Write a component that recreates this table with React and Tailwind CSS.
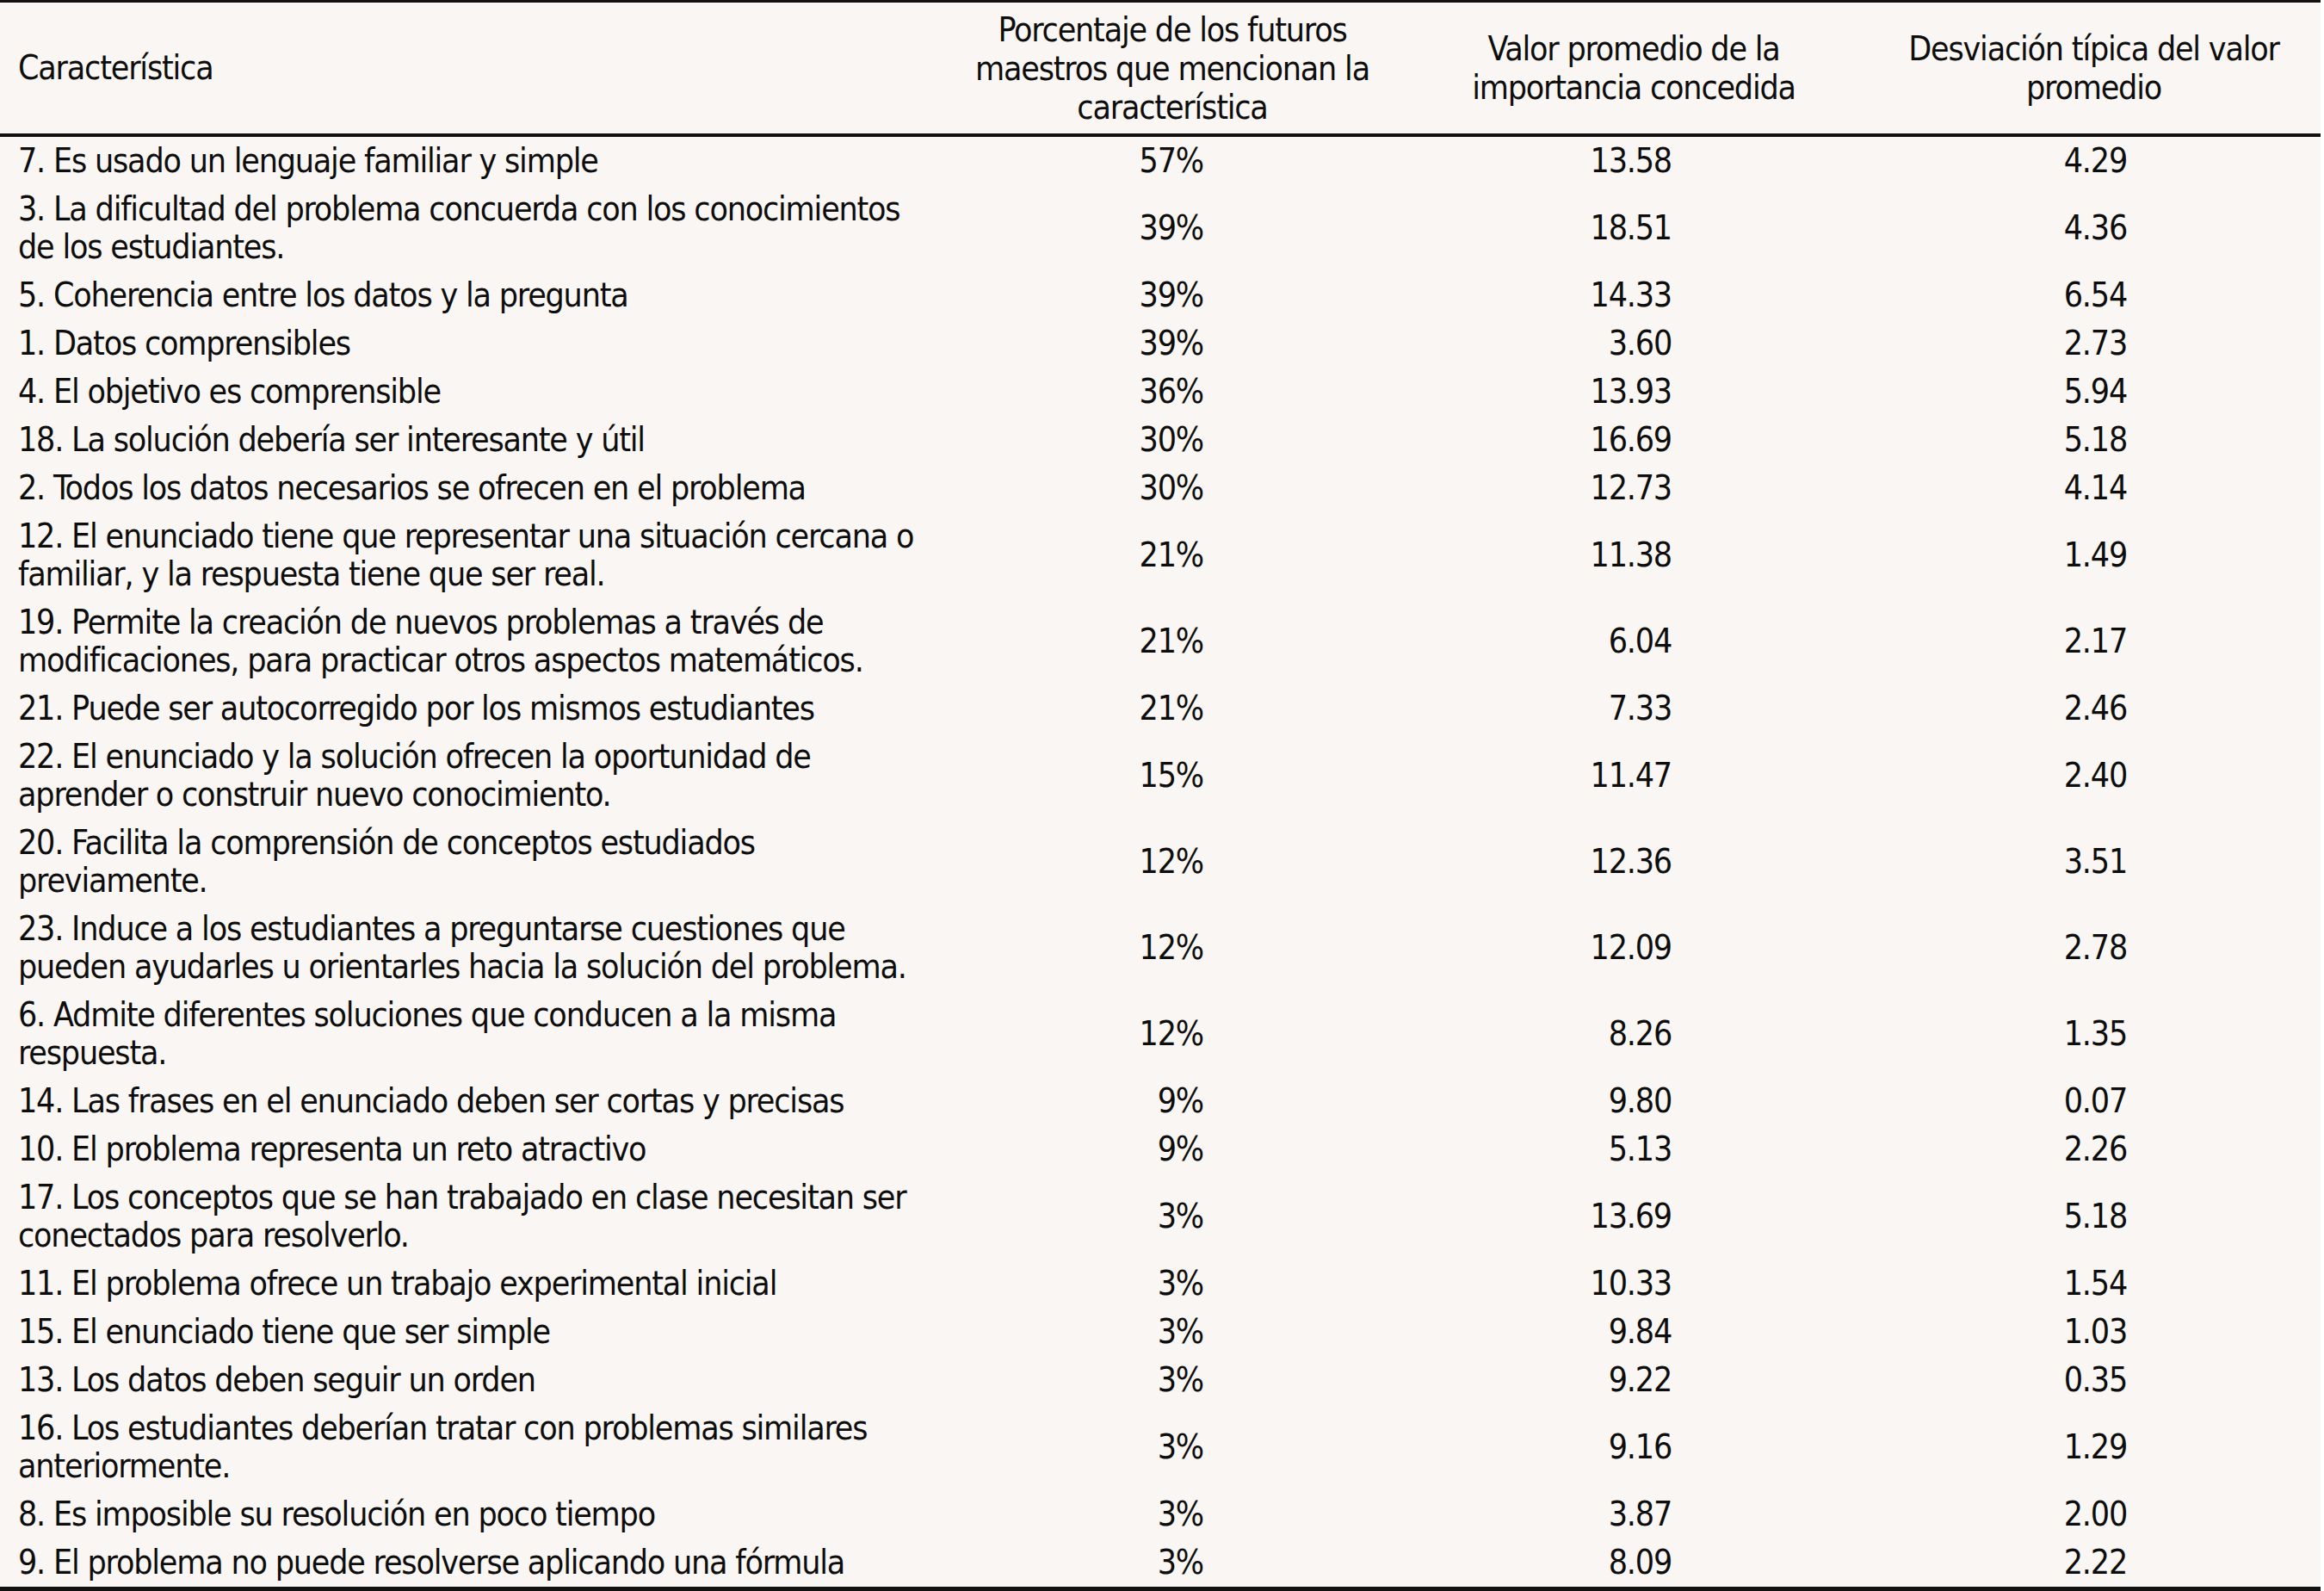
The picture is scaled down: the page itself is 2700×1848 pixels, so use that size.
import React from "react";

const rows = [
  [["7. Es usado un lenguaje familiar y simple"], "57%", "13.58", "4.29"],
  [["3. La dificultad del problema concuerda con los conocimientos", "de los estudiantes."], "39%", "18.51", "4.36"],
  [["5. Coherencia entre los datos y la pregunta"], "39%", "14.33", "6.54"],
  [["1. Datos comprensibles"], "39%", "3.60", "2.73"],
  [["4. El objetivo es comprensible"], "36%", "13.93", "5.94"],
  [["18. La solución debería ser interesante y útil"], "30%", "16.69", "5.18"],
  [["2. Todos los datos necesarios se ofrecen en el problema"], "30%", "12.73", "4.14"],
  [["12. El enunciado tiene que representar una situación cercana o", "familiar, y la respuesta tiene que ser real."], "21%", "11.38", "1.49"],
  [["19. Permite la creación de nuevos problemas a través de", "modificaciones, para practicar otros aspectos matemáticos."], "21%", "6.04", "2.17"],
  [["21. Puede ser autocorregido por los mismos estudiantes"], "21%", "7.33", "2.46"],
  [["22. El enunciado y la solución ofrecen la oportunidad de", "aprender o construir nuevo conocimiento."], "15%", "11.47", "2.40"],
  [["20. Facilita la comprensión de conceptos estudiados", "previamente."], "12%", "12.36", "3.51"],
  [["23. Induce a los estudiantes a preguntarse cuestiones que", "pueden ayudarles u orientarles hacia la solución del problema."], "12%", "12.09", "2.78"],
  [["6. Admite diferentes soluciones que conducen a la misma", "respuesta."], "12%", "8.26", "1.35"],
  [["14. Las frases en el enunciado deben ser cortas y precisas"], "9%", "9.80", "0.07"],
  [["10. El problema representa un reto atractivo"], "9%", "5.13", "2.26"],
  [["17. Los conceptos que se han trabajado en clase necesitan ser", "conectados para resolverlo."], "3%", "13.69", "5.18"],
  [["11. El problema ofrece un trabajo experimental inicial"], "3%", "10.33", "1.54"],
  [["15. El enunciado tiene que ser simple"], "3%", "9.84", "1.03"],
  [["13. Los datos deben seguir un orden"], "3%", "9.22", "0.35"],
  [["16. Los estudiantes deberían tratar con problemas similares", "anteriormente."], "3%", "9.16", "1.29"],
  [["8. Es imposible su resolución en poco tiempo"], "3%", "3.87", "2.00"],
  [["9. El problema no puede resolverse aplicando una fórmula"], "3%", "8.09", "2.22"],
];

export default function App() {
  return (
    <div className="w-[2700px] h-[1848px] bg-white overflow-hidden">
      <div
        className="w-[2696px] bg-[#f9f6f3] text-[#0d0d0d] text-[39px] leading-[44px] tracking-[-1.2px] border-t-[3px] border-b-[5px] border-[#111]"
        style={{ fontFamily: '"Liberation Sans Narrow", "DejaVu Sans Condensed", "Liberation Sans", sans-serif' }}
      >
        <div className="grid grid-cols-[1097px_530px_542px_527px] h-[156px] items-center border-b-4 border-[#111]">
          <div className="pl-[21px]">Característica</div>
          <div className="text-center leading-[45px]">
            Porcentaje de los futuros
            <br />
            maestros que mencionan la
            <br />
            característica
          </div>
          <div className="text-center leading-[45px]">
            Valor promedio de la
            <br />
            importancia concedida
          </div>
          <div className="text-center leading-[45px]">
            Desviación típica del valor
            <br />
            promedio
          </div>
        </div>
        <div className="flex flex-col">
          {rows.map((r, i) => (
            <div key={i} className="grid grid-cols-[1097px_530px_542px_527px] items-center py-[6px]">
              <div className="pl-[21px]">
                {r[0].map((l, j) => (
                  <div key={j} className="whitespace-nowrap">{l}</div>
                ))}
              </div>
              <div className="text-right pr-[229px] whitespace-nowrap">{r[1]}</div>
              <div className="text-right pr-[227px] whitespace-nowrap">{r[2]}</div>
              <div className="text-right pr-[225px] whitespace-nowrap">{r[3]}</div>
            </div>
          ))}
        </div>
      </div>
    </div>
  );
}
